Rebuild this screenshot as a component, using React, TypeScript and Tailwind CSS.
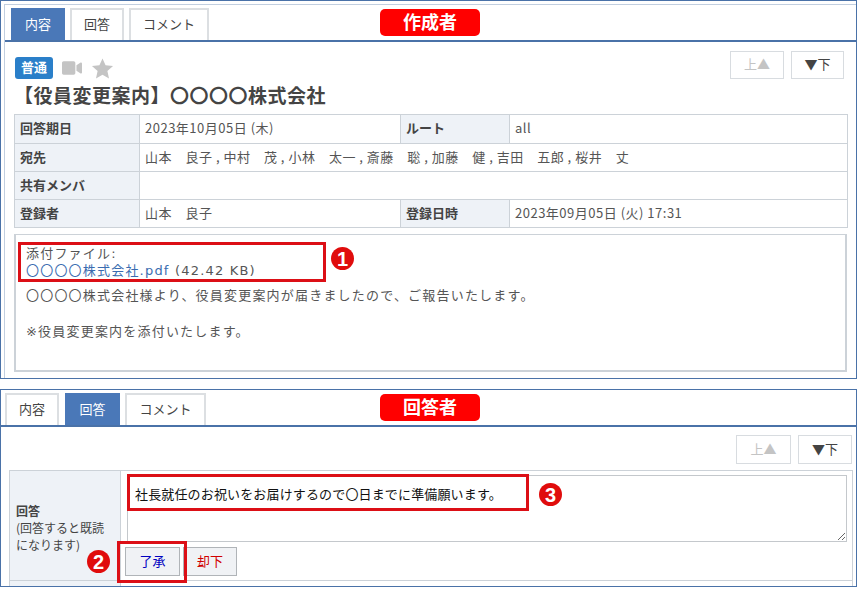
import { FaVideo } from 'react-icons/fa'

const jp = '[font-family:"Noto_Sans_CJK_JP","Liberation_Sans",sans-serif]'
const wide = '[font-family:"DejaVu_Sans","Noto_Sans_CJK_JP",sans-serif]'

function Tab({ label, active, w }: { label: string; active?: boolean; w: string }) {
  return (
    <div
      className={`${w} h-[32px] pb-[3px] flex items-center justify-center text-[13px] border-2 border-b-0 ${
        active ? 'bg-[#4a78b8] border-[#4a78b8] text-white' : 'bg-white border-[#dcdfe2] text-[#444]'
      }`}
    >
      {label}
    </div>
  )
}

function Badge({ label }: { label: string }) {
  return (
    <div className="w-[100px] h-[27px] pb-[2px] rounded-[5px] bg-[#ff0000] text-white font-bold text-[18px] flex items-center justify-center">
      {label}
    </div>
  )
}

function NavButtons({ h, up, down }: { h: string; up: string; down: string }) {
  return (
    <div className="flex gap-[7px]">
      <div className={`${up} ${h} pb-[2px] border border-[#d8dce0] text-[#c4c4c4] text-[13px] flex items-center justify-center`}>
        上▲
      </div>
      <div className={`${down} ${h} pb-[2px] border border-[#d8dce0] text-[#444] text-[13px] flex items-center justify-center`}>
        ▼下
      </div>
    </div>
  )
}

function Th({ children }: { children: React.ReactNode }) {
  return <th className="border border-[#ccd2d8] bg-[#eef2f7] text-left font-bold text-[13px] text-[#444] px-[5px] pb-[2px]">{children}</th>
}

function Td({ children, span }: { children?: React.ReactNode; span?: number }) {
  return (
    <td colSpan={span} className="border border-[#ccd2d8] text-[13px] tracking-[0.5px] text-[#555] px-[5px] pb-[2px] whitespace-pre">
      {children}
    </td>
  )
}

function Marker({ n, cls }: { n: number; cls: string }) {
  return (
    <div className={`absolute ${cls} w-[23px] h-[23px] rounded-full bg-[#e00c0c] text-white font-bold text-[20px] leading-none flex items-center justify-center [font-family:"Liberation_Sans",sans-serif]`}>
      {n}
    </div>
  )
}

export default function App() {
  return (
    <div className={`relative w-[857px] h-[592px] bg-white overflow-hidden ${jp}`}>
      {/* 作成者 */}
      <div className="h-[379px] border border-[#4a72a8] pl-[3px] pt-[3px]">
        <div className="h-full border-l border-t border-[#c2cfe0]">
          <div className="flex items-start pl-[6px] pt-[3px] border-b-2 border-[#4a72a8] h-[37px]">
            <Tab label="内容" active w="w-[54px]" />
            <div className="ml-[5px]"><Tab label="回答" w="w-[54px]" /></div>
            <div className="ml-[5px]"><Tab label="コメント" w="w-[80px]" /></div>
            <div className="ml-[171px] mt-[1px]"><Badge label="作成者" /></div>
          </div>
          <div className="pl-[9px] pr-[5px]">
            <div className="flex justify-between pt-[9px] pr-[7px] h-[38px]">
              <div className="flex items-start pt-[6px] pl-[1px]">
                <div className="w-[38px] h-[22px] pb-[2px] rounded-[3px] bg-[#2a7fc9] text-white font-bold text-[13px] flex items-center justify-center">普通</div>
                <FaVideo className="text-[#c4c4c4] text-[20px] mt-[1px] ml-[9px]" />
                <svg viewBox="0 0 24 24" className="w-[23px] h-[23px] ml-[9px] fill-[#c4c4c4]">
                  <path d="M12 1.5l3.2 7.2 7.8.8-5.9 5.2 1.7 7.7L12 18.4l-6.8 4 1.7-7.7L1 9.5l7.8-.8z" />
                </svg>
              </div>
              <NavButtons h="h-[28px]" up="w-[54px]" down="w-[53px]" />
            </div>
            <h1 className="h-[34px] text-[19px] leading-[29px] tracking-[0.5px] font-bold text-[#444] whitespace-pre">【役員変更案内】〇〇〇〇株式会社</h1>
            <table className="w-[833px] table-fixed border-collapse">
              <colgroup>
                <col className="w-[125px]" />
                <col className="w-[261px]" />
                <col className="w-[109px]" />
                <col className="w-[338px]" />
              </colgroup>
              <tbody>
                <tr className="h-[29px]"><Th>回答期日</Th><Td>2023年10月05日 (木)</Td><Th>ルート</Th><Td>all</Td></tr>
                <tr className="h-[28px]"><Th>宛先</Th><Td span={3}>山本　良子 , 中村　茂 , 小林　太一 , 斎藤　聡 , 加藤　健 , 吉田　五郎 , 桜井　丈</Td></tr>
                <tr className="h-[28px]"><Th>共有メンバ</Th><Td span={3} /></tr>
                <tr className="h-[28px]"><Th>登録者</Th><Td>山本　良子</Td><Th>登録日時</Th><Td>2023年09月05日 (火) 17:31</Td></tr>
              </tbody>
            </table>
            <div className={`mt-[6px] w-[833px] h-[138px] border-2 border-[#ccd2d8] border-t-[1px] pl-[10px] pt-[10px] text-[13px] leading-[17px] text-[#555] tracking-[1.2px] ${wide}`}>
              <p>添付ファイル:</p>
              <p><span className="text-[#3a6cb0]">〇〇〇〇株式会社.pdf</span> (42.42 KB)</p>
              <p className="mt-[8px]">〇〇〇〇株式会社様より、役員変更案内が届きましたので、ご報告いたします。</p>
              <p className="mt-[19px]">※役員変更案内を添付いたします。</p>
            </div>
          </div>
        </div>
      </div>

      {/* 回答者 */}
      <div className="mt-[10px] h-[198px] border border-[#4a72a8]">
        <div className="flex items-start pl-[4px] pt-[3px] border-b-2 border-[#4a72a8] h-[37px]">
          <Tab label="内容" w="w-[54px]" />
          <div className="ml-[6px]"><Tab label="回答" active w="w-[55px]" /></div>
          <div className="ml-[5px]"><Tab label="コメント" w="w-[81px]" /></div>
          <div className="ml-[174px] mt-[1px]"><Badge label="回答者" /></div>
        </div>
        <div className="flex justify-end pt-[8px] pr-[4px] h-[43px]">
          <NavButtons h="h-[29px]" up="w-[55px]" down="w-[54px]" />
        </div>
        <div className="ml-[8px] w-[844px] flex border border-[#ccd2d8] h-[111px]">
          <div className="w-[111px] shrink-0 bg-[#eef2f7] border-r border-[#ccd2d8] pl-[6px] pt-[31px] text-[12px] leading-[17px] text-[#444]">
            <p className="font-bold">回答</p>
            <p>(回答すると既読</p>
            <p>になります)</p>
          </div>
          <div className="flex-1 pl-[6px] pt-[4px]">
            <textarea
              readOnly
              value="社長就任のお祝いをお届けするので〇日までに準備願います。"
              className="block w-[720px] h-[67px] border border-[#c4c8cc] px-[7px] py-[8px] text-[13px] tracking-[0.15px] leading-[20px] text-[#111] outline-none"
            />
            <div className="flex gap-[3px] mt-[5px] -ml-[2px]">
              <div className="w-[55px] h-[29px] pb-[2px] border border-[#b0b4b8] bg-[#f0f2f5] text-[#0000c0] text-[13px] flex items-center justify-center">了承</div>
              <div className="w-[54px] h-[29px] pb-[2px] border border-[#b0b4b8] bg-[#f0f2f5] text-[#d00000] text-[13px] flex items-center justify-center">却下</div>
            </div>
          </div>
        </div>
        <div className="ml-[8px] w-[844px] h-[5px] border-x border-[#ccd2d8] flex">
          <div className="w-[111px] bg-[#eef2f7] border-r border-[#ccd2d8]" />
        </div>
      </div>

      {/* 注釈 */}
      <div className="absolute left-[18px] top-[242px] w-[308px] h-[40px] border-[3px] border-[#dc0f16]" />
      <div className="absolute left-[127px] top-[474px] w-[402px] h-[37px] border-[3px] border-[#dc0f16]" />
      <div className="absolute left-[117px] top-[541px] w-[70px] h-[42px] border-[3px] border-[#dc0f16]" />
      <Marker n={1} cls="left-[331px] top-[247px]" />
      <Marker n={2} cls="left-[87px] top-[550px]" />
      <Marker n={3} cls="left-[539px] top-[483px]" />
    </div>
  )
}
